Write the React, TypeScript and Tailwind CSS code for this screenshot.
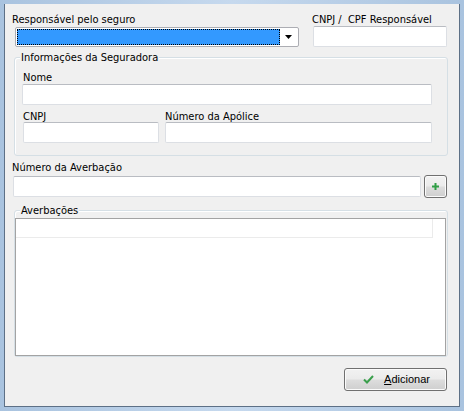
import React from "react";

const lbl = "font-['DejaVu_Sans_Condensed','Liberation_Sans',sans-serif] text-[11px] leading-[13px] h-[13px] text-[#000] whitespace-nowrap";
const input = "bg-white border border-[#dcdfe4] border-t-[#b9bcc2] rounded-[2px] h-[21px]";
const btn = "border border-[#707070] rounded-[3px] bg-[linear-gradient(#f2f2f2,#ebebeb_48%,#dddddd_52%,#cfcfcf)] shadow-[inset_0_0_0_1px_#fbfbfb]";
const group = "flex flex-col border border-[#d5dfe5] rounded-[3px] shadow-[inset_1px_1px_0_#ffffff]";
const legend = "self-start -mt-[7px] ml-[5px] px-[1px] bg-[#f0f0f0]";

export default function App() {
  return (
    <div className="w-[464px] h-[411px] bg-[linear-gradient(90deg,#a9c3df,#c6d9ee_50%,#a9c3df)] p-[4px]">
      <div className="h-[403px] bg-[#f0f0f0] border-x border-b border-[#5d7086] flex flex-col">
        {/* Row 1 */}
        <div className="flex items-start pt-[9px] ml-[7px]">
          <div className="flex flex-col w-[287px]">
            <div className={lbl}>Responsável pelo seguro</div>
            <div className="ml-[3px] mt-[1px] w-[284px] h-[20px] bg-white border border-[#acadb3] rounded-[2px] flex items-start p-[1px]">
              <div className="w-[263px] h-[16px] bg-[#3399ff] border border-dotted border-black" />
              <div className="flex-1 h-[16px] flex items-center justify-center">
                <svg width="7" height="4" viewBox="0 0 7 4">
                  <path d="M0 0 H7 L3.5 4 Z" fill="#000" />
                </svg>
              </div>
            </div>
          </div>
          <div className="flex flex-col ml-[13px] w-[135px]">
            <div className={lbl}>CNPJ /&nbsp; CPF Responsável</div>
            <div className={`${input} ml-[1px] w-[134px]`} />
          </div>
        </div>

        {/* Group 1 */}
        <div className={`${group} mt-[10px] ml-[9px] w-[434px] h-[99px]`}>
          <div className={`${lbl} ${legend}`}>Informações da Seguradora</div>
          <div className={`${lbl} mt-[7px] ml-[8px]`}>Nome</div>
          <div className={`${input} ml-[7px] w-[410px]`} />
          <div className="flex mt-[5px] ml-[8px]">
            <div className="flex flex-col w-[136px]">
              <div className={lbl}>CNPJ</div>
              <div className={`${input} -mt-[1px] w-[136px]`} />
            </div>
            <div className="flex flex-col ml-[6px] w-[267px]">
              <div className={lbl}>Número da Apólice</div>
              <div className={`${input} -mt-[1px] w-[267px]`} />
            </div>
          </div>
        </div>

        {/* Averbação */}
        <div className={`${lbl} mt-[5px] ml-[7px]`}>Número da Averbação</div>
        <div className="flex items-start mt-[1px] ml-[8px]">
          <div className={`${input} mt-[1px] w-[408px]`} />
          <div className={`${btn} ml-[3px] w-[23px] h-[23px] flex items-center justify-center`}>
            <svg width="9" height="9" viewBox="0 0 9 9">
              <path d="M4.5 1 V8 M1 4.5 H8" stroke="#2f9e45" strokeWidth="2" />
            </svg>
          </div>
        </div>

        {/* Group 2 */}
        <div className={`${group} mt-[12px] ml-[9px] w-[434px] h-[147px]`}>
          <div className={`${lbl} ${legend}`}>Averbações</div>
          <div className="mt-[1px] w-[431px] h-[138px] bg-white border border-[#a3a3a3]">
            <div className="w-[417px] h-[19px] border-b border-r border-[#ebebeb]" />
          </div>
        </div>

        {/* Button */}
        <div className="flex justify-end pr-[12px] mt-[11px]">
          <div className={`${btn} w-[103px] h-[23px] flex items-center justify-center gap-[10px] pl-[2px]`}>
            <svg width="11" height="9" viewBox="0 0 11 9">
              <path d="M1 4.5 L4 7.5 L10 1" stroke="#3a9f4c" strokeWidth="2" fill="none" />
            </svg>
            <span className="font-['Liberation_Sans',Arial,sans-serif] text-[11px] leading-[13px] text-black">
              <span className="underline underline-offset-[1px]">A</span>dicionar
            </span>
          </div>
        </div>
      </div>
    </div>
  );
}
